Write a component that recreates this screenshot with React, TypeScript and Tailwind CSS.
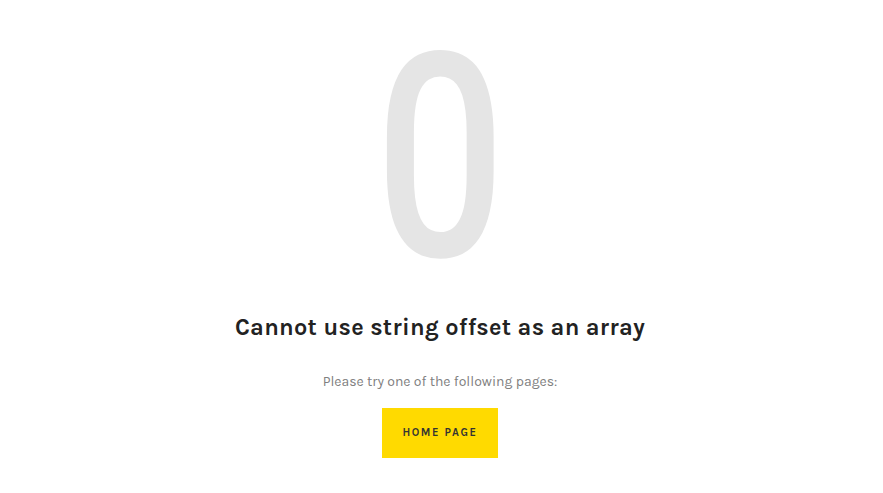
export default function App() {
  return (
    <div className="min-h-[493px] w-full bg-white flex flex-col items-center pr-[3px] pt-[29px]" style={{ fontFamily: "Karla, 'Open Sans', Roboto, sans-serif" }}>
      <span className="block h-[260px] text-[286px] leading-[260px] font-medium text-[#e5e5e5] scale-x-[0.8]" style={{ fontFamily: "Roboto, sans-serif" }}>0</span>
      <h1 className="mt-[22px] text-[23.5px] leading-[32px] font-bold text-[#222] tracking-[0.3px]">Cannot use string offset as an array</h1>
      <p className="mt-[29px] text-[14px] leading-[20px] text-[#808080]">Please try one of the following pages:</p>
      <a className="mt-[16px] w-[116px] h-[50px] bg-[#ffda00] flex items-center justify-center text-[11px] font-bold tracking-[1.6px] text-[#333]">HOME PAGE</a>
    </div>
  );
}
